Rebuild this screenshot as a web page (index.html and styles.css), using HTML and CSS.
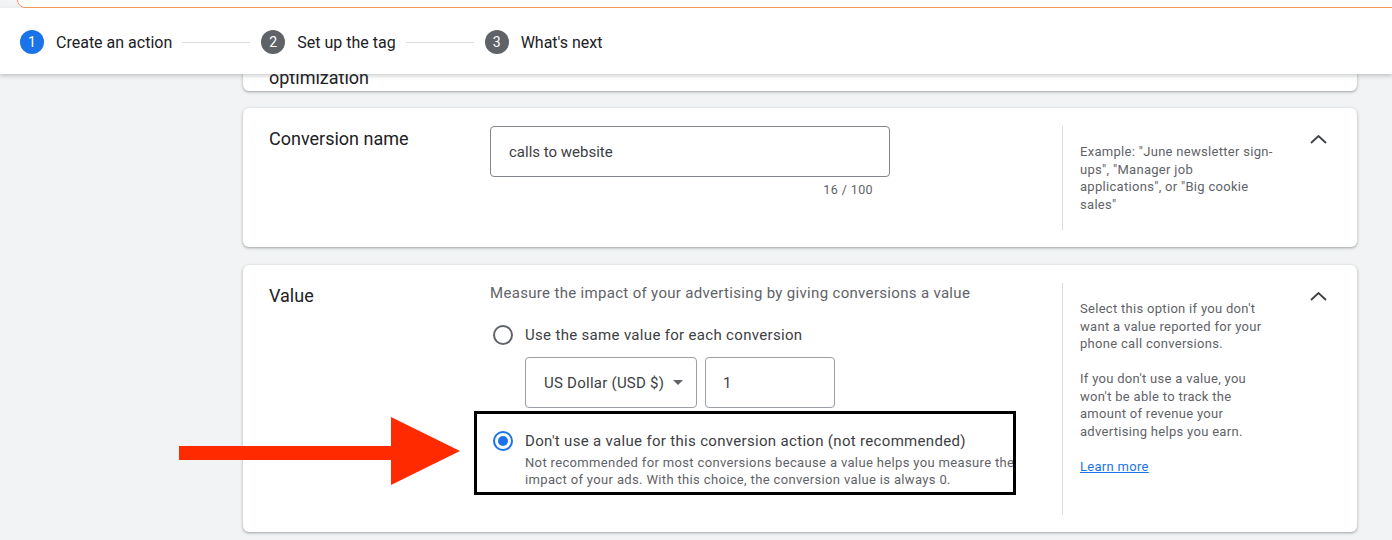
FILE: index.html
```html
<!DOCTYPE html>
<html lang="en">
<head>
    <meta charset="UTF-8">
    <title>New conversion action</title>
    <link rel="stylesheet" href="styles.css">
</head>
<body>
    <div class="banner"></div>

    <header class="stepper">
        <div class="step active">
            <span class="step-num">1</span>
            <span class="step-label">Create an action</span>
        </div>
        <span class="step-line"></span>
        <div class="step">
            <span class="step-num">2</span>
            <span class="step-label">Set up the tag</span>
        </div>
        <span class="step-line"></span>
        <div class="step">
            <span class="step-num">3</span>
            <span class="step-label">What's next</span>
        </div>
    </header>

    <main class="content">
        <!-- previous section, scrolled under the stepper -->
        <section class="card card-partial">
            <h2 class="card-title">optimization</h2>
        </section>

        <!-- Conversion name -->
        <section class="card">
            <h2 class="card-title">Conversion name</h2>
            <div class="card-body">
                <div class="text-field">calls to website</div>
                <div class="counter">16 / 100</div>
            </div>
            <aside class="card-help">
                <p>Example: "June newsletter sign-ups", "Manager job applications", or "Big cookie sales"</p>
            </aside>
            <div class="collapse">
                <svg width="17" height="9" viewBox="0 0 17 9"><polyline points="1,8 8.5,1 16,8" fill="none" stroke="#3c4043" stroke-width="1.8"/></svg>
            </div>
        </section>

        <!-- Value -->
        <section class="card">
            <h2 class="card-title">Value</h2>
            <div class="card-body">
                <p class="card-desc">Measure the impact of your advertising by giving conversions a value</p>
                <div class="radio-row">
                    <span class="radio"></span>
                    <span class="radio-label">Use the same value for each conversion</span>
                </div>
                <div class="value-fields">
                    <div class="select-field">
                        <span>US Dollar (USD $)</span>
                        <span class="caret"></span>
                    </div>
                    <div class="amount-field">1</div>
                </div>
                <div class="option-box">
                    <div class="radio-row">
                        <span class="radio checked"></span>
                        <span class="radio-label">Don't use a value for this conversion action (not recommended)</span>
                    </div>
                    <p class="option-note">Not recommended for most conversions because a value helps you measure the impact of your ads. With this choice, the conversion value is always 0.</p>
                </div>
            </div>
            <aside class="card-help tall">
                <p>Select this option if you don't want a value reported for your phone call conversions.</p>
                <p>If you don't use a value, you won't be able to track the amount of revenue your advertising helps you earn.</p>
                <p><a href="#">Learn more</a></p>
            </aside>
            <div class="collapse">
                <svg width="17" height="9" viewBox="0 0 17 9"><polyline points="1,8 8.5,1 16,8" fill="none" stroke="#3c4043" stroke-width="1.8"/></svg>
            </div>
        </section>
    </main>

    <!-- annotation arrow -->
    <svg class="arrow" width="282" height="69" viewBox="0 0 282 69">
        <polygon points="0,29 212,29 212,0 281,34 212,68 212,43 0,43" fill="#ff2a00"/>
    </svg>
</body>
</html>
```

FILE: styles.css
```css
body {
    margin: 0;
    background-color: #f1f3f4;
    font-family: Roboto, "Liberation Sans", sans-serif;
    color: #3c4043;
    overflow: hidden;
    position: relative;
    height: 540px;
}

.banner {
    position: absolute;
    top: -20px;
    left: 17px;
    right: -20px;
    height: 26px;
    background-color: #fff;
    border: 1.5px solid #f59a5b;
    border-radius: 8px;
}

/* Stepper */
.stepper {
    position: absolute;
    top: 8px;
    left: 0;
    right: 0;
    height: 66px;
    box-sizing: border-box;
    padding: 2px 0 0 20px;
    background-color: #fff;
    box-shadow: 0 2px 4px rgba(60, 64, 67, 0.25);
    display: flex;
    align-items: center;
    z-index: 2;
}

.step {
    display: flex;
    align-items: center;
    gap: 12px;
}

.step-num {
    width: 24px;
    height: 24px;
    border-radius: 50%;
    background-color: #5f6368;
    color: #fff;
    font-size: 14px;
    display: flex;
    align-items: center;
    justify-content: center;
}

.step.active .step-num {
    background-color: #1a73e8;
}

.step-label {
    font-size: 16px;
    color: #202124;
}

.step-line {
    width: 68px;
    height: 1px;
    background-color: #dadce0;
    margin: 0 11px 0 10px;
}

/* Cards */
.content {
    margin-left: 243px;
    width: 1114px;
}

.card {
    background-color: #fff;
    border-radius: 6px;
    box-shadow: 0 1px 2px rgba(60, 64, 67, 0.3), 0 1px 3px 1px rgba(60, 64, 67, 0.12);
    display: grid;
    grid-template-columns: 221px 572px 218px 1fr;
    padding: 18px 30px 17px 26px;
    margin-bottom: 18px;
}

.card-partial {
    display: flex;
    align-items: flex-end;
    height: 91px;
    box-sizing: border-box;
    padding: 0 26px 1px;
    margin-bottom: 17px;
}

.card-title {
    margin: 0;
    padding-top: 1px;
    font-size: 18px;
    font-weight: 400;
    line-height: 24px;
    color: #202124;
}

.card-body {
    display: flex;
    flex-direction: column;
}

.text-field {
    width: 400px;
    height: 51px;
    box-sizing: border-box;
    border: 1px solid #80868b;
    border-radius: 4px;
    padding: 0 18px;
    display: flex;
    align-items: center;
    font-size: 15px;
    color: #3c4043;
}

.counter {
    width: 383px;
    text-align: right;
    font-size: 12.5px;
    letter-spacing: 0.4px;
    color: #5f6368;
    margin-top: 5px;
}

.card-help {
    border-left: 1px solid #dadce0;
    padding: 17px 0 0 17px;
    min-height: 104px;
    box-sizing: border-box;
    font-size: 13px;
    letter-spacing: 0.3px;
    line-height: 17.5px;
    color: #5f6368;
}

.card-help.tall {
    min-height: 232px;
}

.card-help p {
    margin: 0 0 17.5px;
    width: 195px;
}

.card-help p:last-child {
    margin-bottom: 0;
}

.card-help a {
    color: #1a73e8;
}

.collapse {
    display: flex;
    justify-content: flex-end;
    align-items: flex-start;
    padding-top: 9px;
}

/* Value card */
.card-desc {
    margin: 0;
    font-size: 15px;
    letter-spacing: 0.32px;
    line-height: 20px;
    color: #5f6368;
}

.radio-row {
    display: flex;
    align-items: center;
    gap: 12px;
    height: 24px;
    padding-left: 3px;
    margin-top: 20px;
}

.radio {
    width: 20px;
    height: 20px;
    box-sizing: border-box;
    border: 2px solid #5f6368;
    border-radius: 50%;
    display: flex;
    align-items: center;
    justify-content: center;
}

.radio.checked {
    border-color: #1a73e8;
}

.radio.checked::after {
    content: "";
    width: 10px;
    height: 10px;
    border-radius: 50%;
    background-color: #1a73e8;
}

.radio-label {
    font-size: 15px;
    letter-spacing: 0.32px;
    color: #3c4043;
}

.value-fields {
    display: flex;
    gap: 8px;
    margin: 10px 0 0 35px;
}

.select-field, .amount-field {
    height: 51px;
    box-sizing: border-box;
    border: 1px solid #9aa0a6;
    border-radius: 4px;
    display: flex;
    align-items: center;
    font-size: 15px;
    color: #3c4043;
}

.select-field {
    width: 172px;
    padding: 0 13px 0 18px;
    justify-content: space-between;
    letter-spacing: 0.25px;
}

.caret {
    width: 0;
    height: 0;
    border-left: 5px solid transparent;
    border-right: 5px solid transparent;
    border-top: 5px solid #5f6368;
}

.amount-field {
    width: 130px;
    padding-left: 17px;
}

.option-box {
    width: 542px;
    box-sizing: border-box;
    border: 3px solid #000;
    margin: 3px 0 0 -16px;
    padding: 15px 0 4px 16px;
    overflow: hidden;
}

.option-box .radio-row {
    margin-top: 0;
    padding-left: 0;
}

.option-note {
    margin: 1px 0 0 32px;
    width: 515px;
    font-size: 13px;
    letter-spacing: 0.35px;
    line-height: 17px;
    color: #5f6368;
}

.arrow {
    position: absolute;
    left: 179px;
    top: 417px;
}
```
